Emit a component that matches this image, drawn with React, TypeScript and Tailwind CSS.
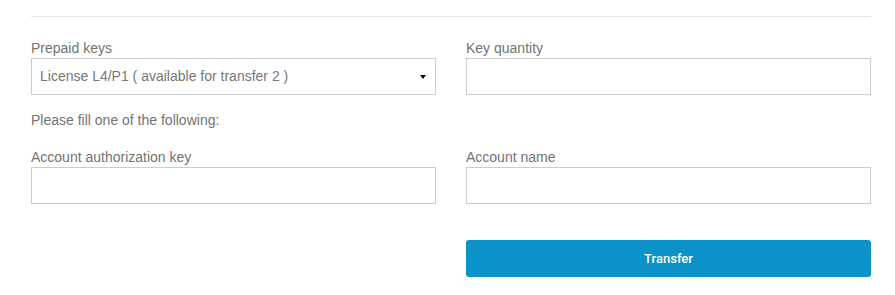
export default function App() {
  return (
    <div className="w-[895px] h-[295px] bg-white font-['Liberation_Sans',Arial,sans-serif] text-[14px] text-[#737373]">
      <div className="pl-[31px] pr-[24px]">
        <div className="pt-[16px]">
          <hr className="border-0 border-t border-[#e5e5e5] w-[840px]" />
        </div>

        <div className="grid grid-cols-[405px_405px] gap-x-[30px] pt-[21px]">
          <div>
            <label className="block leading-[20px]">Prepaid keys</label>
            <div className="h-[37px] border border-[#ccc] flex items-center justify-between pl-[8px] pr-[9px] text-[#777]">
              <span>License L4/P1 ( available for transfer 2 )</span>
              <span className="w-0 h-0 border-l-[3px] border-r-[3px] border-t-[4px] border-l-transparent border-r-transparent border-t-black" />
            </div>
          </div>
          <div>
            <label className="block leading-[20px]">Key quantity</label>
            <input className="block w-full h-[37px] border border-[#ccc] outline-none px-[8px]" />
          </div>
        </div>

        <p className="leading-[20px] mt-[15px]">Please fill one of the following:</p>

        <div className="grid grid-cols-[405px_405px] gap-x-[30px] pt-[17px]">
          <div>
            <label className="block leading-[20px]">Account authorization key</label>
            <input className="block w-full h-[37px] border border-[#ccc] outline-none px-[8px]" />
          </div>
          <div>
            <label className="block leading-[20px]">Account name</label>
            <input className="block w-full h-[37px] border border-[#ccc] outline-none px-[8px]" />
          </div>
        </div>

        <div className="grid grid-cols-[405px_405px] gap-x-[30px] pt-[36px]">
          <div />
          <button
            type="button"
            className="h-[37px] rounded-[3px] bg-[#0a92c9] text-white font-['Roboto',sans-serif] font-medium text-[13px]"
          >
            Transfer
          </button>
        </div>
      </div>
    </div>
  );
}
